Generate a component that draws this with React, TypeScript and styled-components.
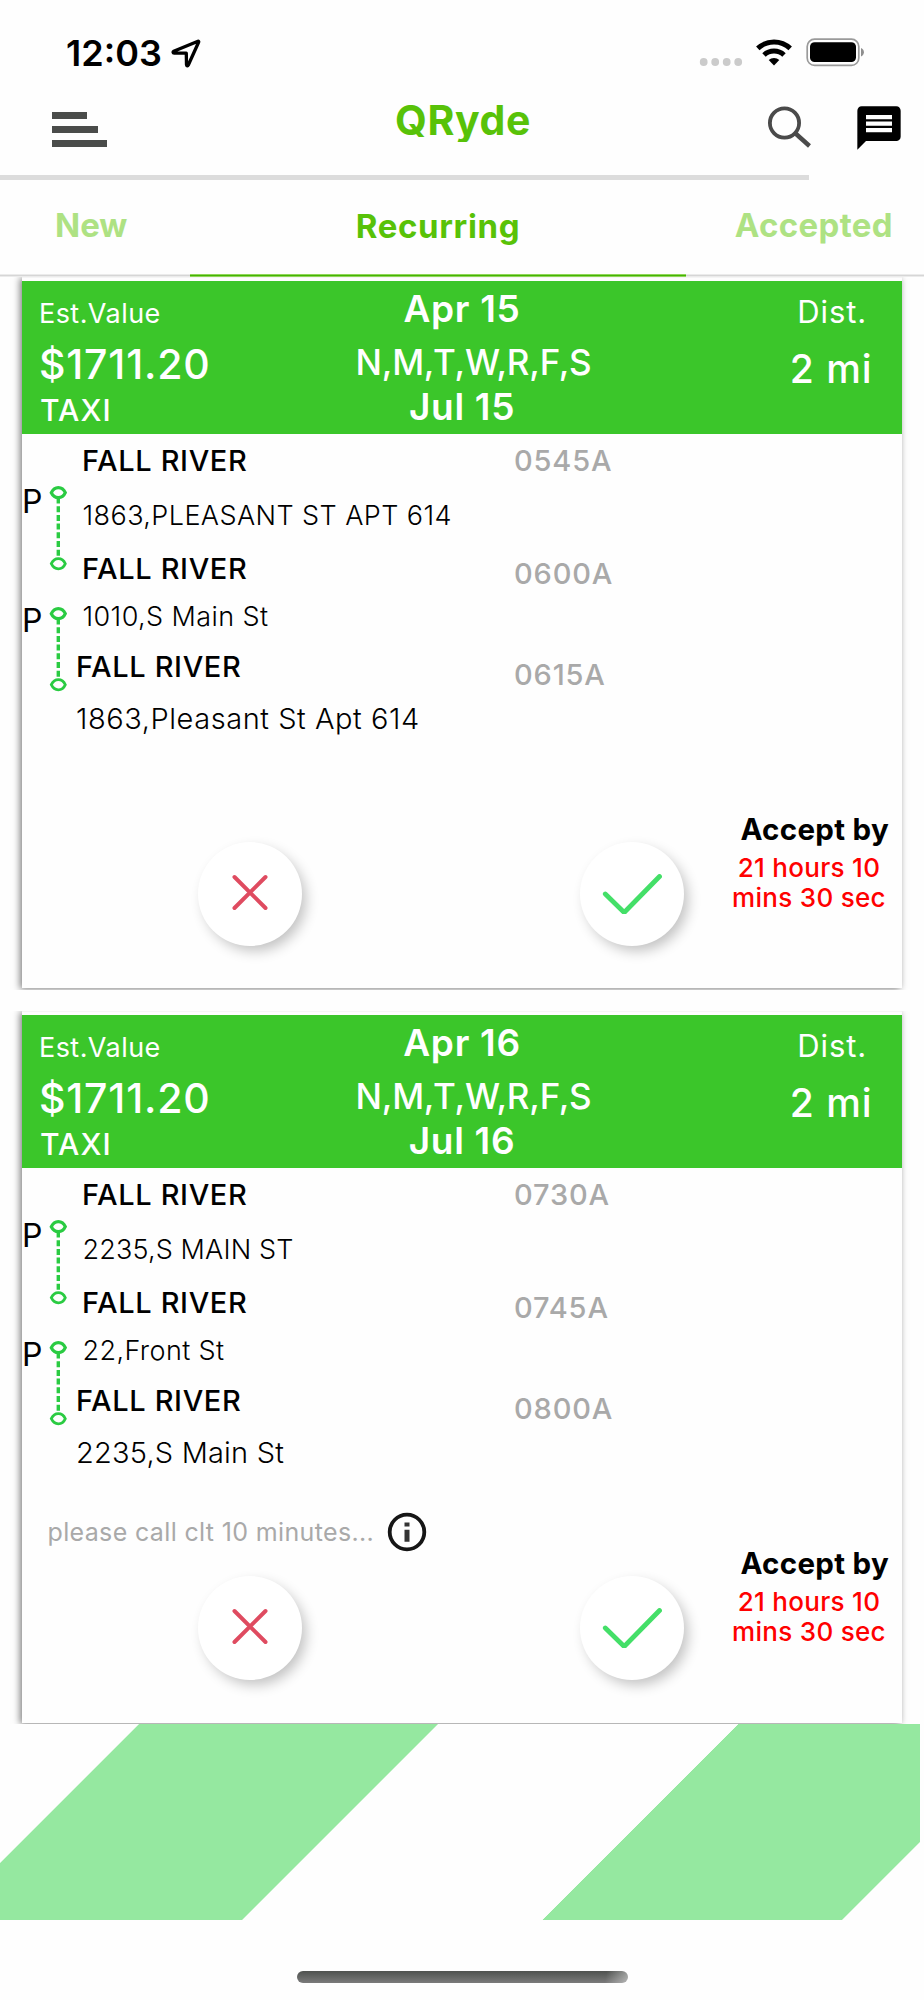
import React from 'react';
import styled, { createGlobalStyle, css } from 'styled-components';
import { MdMessage } from 'react-icons/md';

const GlobalStyle = createGlobalStyle`
  *, *::before, *::after { box-sizing: border-box; }
  body {
    margin: 0;
    background: #fefefe;
    color: #000;
    font-family: Inter, "Liberation Sans", sans-serif;
  }
  button { border: 0; padding: 0; font: inherit; }
  svg { display: block; flex: none; }
`;

const type = (size: number, line: number, weight: number, tracking = 0) => css`
  font-size: ${size}px;
  line-height: ${line}px;
  font-weight: ${weight};
  letter-spacing: ${tracking}px;
  white-space: nowrap;
`;

const Screen = styled.main`
  width: 924px;
  height: 2000px;
  display: flex;
  flex-direction: column;
  overflow: hidden;
  background: #fefefe;
`;

/* Status bar */
const StatusBar = styled.div`
  flex: none;
  height: 80px;
  padding: 33px 59px 0 66px;
  display: flex;
  align-items: flex-start;
`;

const Clock = styled.span`
  ${type(36, 40, 600)}
`;

const LocationGlyph = styled.svg`
  margin: 6px 0 0 9px;
`;

const StatusIcons = styled.div`
  margin: 5px 0 0 auto;
`;

/* App bar */
const AppBar = styled.header`
  flex: none;
  height: 95px;
  padding: 15px 23px 0 52px;
  display: grid;
  grid-template-columns: 343px 1fr 134px;
`;

const MenuButton = styled.button`
  width: 55px;
  height: 36px;
  margin-top: 17px;
  display: flex;
  flex-direction: column;
  gap: 7px;
  background: none;
`;

const MenuBar = styled.span<{ $width: number }>`
  width: ${(p) => p.$width}px;
  height: 7px;
  background: #4a4c4a;
`;

const Title = styled.h1`
  ${type(41, 50, 700, 0.6)}
  margin: 0;
  height: 47px;
  overflow: hidden;
  color: #58c208;
`;

const AppActions = styled.div`
  display: flex;
  align-items: flex-start;
  justify-content: space-between;
`;

const SearchGlyph = styled.svg`
  margin-top: 11px;
`;

const ChatGlyph = styled(MdMessage)`
  margin: 7px -4px 0 0;
`;

const Divider = styled.div`
  flex: none;
  width: 809px;
  height: 4.5px;
  background: #dcdcdc;
`;

/* Tabs */
const Tabs = styled.nav`
  flex: none;
  height: 97.5px;
  display: grid;
  grid-template-columns: 190px 496px 238px;
`;

const Tab = styled.button<{ $active?: boolean; $align: string; $inset?: number; $tracking?: number }>`
  ${type(33, 40, 700)}
  letter-spacing: ${(p) => p.$tracking ?? 0}px;
  padding: 0 ${(p) => p.$inset ?? 0}px ${(p) => (p.$active ? 4 : 6.5)}px;
  text-align: ${(p) => p.$align};
  color: ${(p) => (p.$active ? '#58c208' : '#aee283')};
  background: ${(p) =>
    p.$active
      ? 'linear-gradient(#8fd658 0 1px, #45b304 1px 2px, #8fd658 2px)'
      : 'linear-gradient(#ebebeb 0 1px, #d6d6d6 1px 2px, #ebebeb 2px)'}
    left bottom / 100% 3px no-repeat;
`;

/* Trip cards */
const CardClip = styled.div`
  flex: none;
  padding: 0 21.7px 1.5px 22px;
  overflow: hidden;
  & + & { margin-top: 21.5px; }
`;

const Card = styled.article`
  height: 711.3px;
  border-top: 1px solid #f5f5f5;
  padding-top: 3px;
  background: #fefefe;
  box-shadow: -2px 1px 7px rgba(0, 0, 0, 0.5);
`;

const CardHeader = styled.div`
  height: 153px;
  padding: 0 19px;
  display: grid;
  grid-template-columns: 240px 362px 1fr;
  background: #3bc62a;
  color: #fff;
`;

const HeaderColumn = styled.div<{ $center?: boolean; $inset?: number }>`
  display: flex;
  flex-direction: column;
  padding-left: ${(p) => p.$inset ?? 0}px;
  align-items: ${(p) => (p.$center ? 'center' : 'flex-start')};
`;

const ValueLabel = styled.span`
  ${type(27, 32, 400, 0.44)}
  margin: 17px 0 0 -2px;
`;

const Value = styled.span`
  ${type(41, 44, 450, 0.8)}
  margin: 12px 0 0 -2px;
`;

const Vehicle = styled.span`
  ${type(30, 32, 500, 1.1)}
  margin: 8px 0 0 -1px;
`;

const TripDate = styled.span<{ $gap: number }>`
  ${type(37, 40, 600, 0.7)}
  margin-top: ${(p) => p.$gap}px;
`;

const Days = styled.span`
  ${type(35, 40, 500, -0.22)}
  margin: 13px 0 0 23px;
`;

const DistanceLabel = styled.span`
  ${type(31, 36, 400, 0.9)}
  margin-top: 12.5px;
`;

const Distance = styled.span`
  ${type(39, 44, 550, 1)}
  margin: 17px 0 0 -2px;
`;

const Route = styled.div`
  height: 344px;
  display: grid;
  grid-template-columns: 60px 432px 1fr;
`;

const Rail = styled.div`
  padding-top: 51px;
`;

const Leg = styled.div`
  height: 119px;
  display: grid;
  grid-template-columns: 27px 1fr;
`;

const LegMark = styled.span`
  ${type(32, 33, 400)}
`;

const Connector = styled.svg<{ $drop: number }>`
  margin-top: ${(p) => p.$drop}px;
`;

const Stops = styled.div`
  display: flex;
  flex-direction: column;
  padding-top: 11px;
`;

const City = styled.span<{ $gap?: number; $inset?: number }>`
  ${type(29, 32, 500, 0.63)}
  margin: ${(p) => p.$gap ?? 0}px 0 0 ${(p) => p.$inset ?? 0}px;
`;

const Street = styled.span<{ $gap: number; $tracking: number }>`
  ${type(27, 32, 300)}
  letter-spacing: ${(p) => p.$tracking}px;
  margin: ${(p) => p.$gap}px 0 0 0.5px;
`;

const FinalStreet = styled.span<{ $tracking: number }>`
  ${type(29, 32, 300)}
  letter-spacing: ${(p) => p.$tracking}px;
  margin: 20px 0 0 -6px;
`;

const Times = styled.div`
  display: flex;
  flex-direction: column;
  padding-top: 11px;
  color: #a9a9a9;
`;

const Time = styled.span<{ $gap?: number }>`
  ${type(29, 32, 550, 0.85)}
  margin-top: ${(p) => p.$gap ?? 0}px;
`;

const NoteRow = styled.div`
  height: 38px;
  padding-left: 25.5px;
  display: flex;
  align-items: flex-start;
`;

const Note = styled.span`
  ${type(25, 32, 400, 0.35)}
  width: 339.5px;
  padding-top: 4px;
  color: #a9a9a9;
`;

const Actions = styled.div`
  display: flex;
  padding-left: 176px;
`;

const RoundButton = styled.button`
  width: 104px;
  height: 104px;
  margin: 26px 278px 0 0;
  border-radius: 50%;
  display: grid;
  place-items: center;
  background: #fff;
  box-shadow: 5px 6px 13px -1px rgba(0, 0, 0, 0.24);
  & + & { margin-right: 45px; }
`;

const Deadline = styled.div`
  width: 160px;
  text-align: center;
`;

const DeadlineLabel = styled.div`
  ${type(29.5, 24, 700, 0.3)}
  padding-top: 1px;
  text-align: right;
`;

const Countdown = styled.div`
  ${type(26, 30, 550, 0.3)}
  margin-top: 12px;
  color: #f00;
`;

/* Footer */
const Stripes = styled.div`
  flex: none;
  width: 919.7px;
  height: 196px;
  background: linear-gradient(
    135deg,
    transparent 98px, #95e8a0 98.7px 309.4px, transparent 310.1px 521.8px,
    #95e8a0 522.5px 733.6px, transparent 734.3px
  );
`;

const HomeIndicator = styled.div`
  flex: none;
  width: 331px;
  height: 12px;
  margin: 51px 0 0 297px;
  border-radius: 6px;
  background:
    linear-gradient(100deg, transparent 93%, rgba(255, 255, 255, 0.45)),
    linear-gradient(#4f524f, #7b7b7b);
`;

interface Trip {
  start: string;
  end: string;
  stops: [string, string, string];
  times: [string, string, string];
  tracking: [number, number, number];
  note?: string;
}

const trips: Trip[] = [
  {
    start: 'Apr 15',
    end: 'Jul 15',
    stops: ['1863,PLEASANT ST APT 614', '1010,S Main St', '1863,Pleasant St Apt 614'],
    times: ['0545A', '0600A', '0615A'],
    tracking: [0.42, 0.4, 0.55],
  },
  {
    start: 'Apr 16',
    end: 'Jul 16',
    stops: ['2235,S MAIN ST', '22,Front St', '2235,S Main St'],
    times: ['0730A', '0745A', '0800A'],
    tracking: [0.15, 0.4, 0.2],
    note: 'please call clt 10 minutes...',
  },
];

const LocationIcon = () => (
  <LocationGlyph width="30" height="29" viewBox="0 0 30 29">
    <path
      d="M27 2.3 2.7 12.3c-1 .5-.8 1.7.4 1.7l12.2.2.2 11.6c0 1.2 1.3 1.4 1.7.4L27.7 3c.2-.5-.2-.9-.7-.7Z"
      fill="none"
      stroke="#000"
      strokeWidth="3.3"
      strokeLinejoin="round"
    />
  </LocationGlyph>
);

const SignalIcons = () => (
  <svg width="166" height="30" viewBox="0 0 166 30">
    <g fill="#cbcbcb">
      <circle cx="4.7" cy="24" r="3.9" />
      <circle cx="16.2" cy="24" r="3.9" />
      <circle cx="27.7" cy="24" r="3.9" />
      <circle cx="39.2" cy="24" r="3.9" />
    </g>
    <g fill="none" stroke="#000" strokeWidth="5">
      <path d="M58.8 10.4a23.6 23.6 0 0 1 32.4 0" />
      <path d="M65 17a14.6 14.6 0 0 1 20 0" />
    </g>
    <path d="M75 27.4 69.7 22a7.7 7.7 0 0 1 10.6 0Z" />
    <rect x="108.2" y="1.2" width="51.6" height="26.2" rx="7.4" fill="none" stroke="#9a9a9a" strokeWidth="1.7" />
    <rect x="111" y="4.2" width="46" height="19.8" rx="4.6" />
    <path d="M162 10c1.900.8 2.900 2.300 2.900 4.200s-1 3.400-2.900 4.200Z" fill="#8f8f8f" />
  </svg>
);

const SearchIcon = () => (
  <SearchGlyph width="45" height="42" viewBox="0 0 45 42" fill="none" stroke="#4a4a4a">
    <circle cx="17.5" cy="17" r="14.6" strokeWidth="3.8" />
    <path d="m28 27 14.5 13" strokeWidth="4.4" />
  </SearchGlyph>
);

const RouteConnector = ({ drop }: { drop: number }) => (
  <Connector $drop={drop} width="18" height="86" viewBox="0 0 18 86" fill="none" stroke="#2acb42">
    <path
      d="M2.3 7.700C4 4.200 6.500 2.600 9.300 2.600S14.800 4.200 16.300 7.700C14.800 11.200 12 12.600 9.300 12.600S4 11.200 2.300 7.700Z"
      strokeWidth="3.2"
    />
    <path d="M9.300 12.500V71.500" strokeWidth="3.400" strokeDasharray="6 2.700" />
    <path
      d="M2.300 78.700C4 75.200 6.500 73.600 9.300 73.600S14.800 75.200 16.300 78.700C14.800 82.200 12 83.800 9.300 83.800S4 82.200 2.300 78.700Z"
      strokeWidth="2.800"
    />
  </Connector>
);

const InfoIcon = () => (
  <svg width="40" height="40" viewBox="0 0 40 40">
    <circle cx="20" cy="20" r="17.3" fill="none" stroke="#161616" strokeWidth="3.8" />
    <path d="M17.500 10.500h5v4h-5zM17.500 17.700h5v12h-5z" fill="#333" />
  </svg>
);

const CrossIcon = () => (
  <svg width="40" height="40" viewBox="0 0 40 40" fill="none" stroke="#df4b60" strokeWidth="4" strokeLinecap="round">
    <path d="m4.500 3 31 31M35.500 3l-31 31" />
  </svg>
);

const CheckIcon = () => (
  <svg width="60" height="40" viewBox="0 0 60 40" fill="none" stroke="#44df68" strokeWidth="4.8">
    <path d="m3.300 20 18.900 18.500L57.500 2.500" strokeLinecap="round" />
  </svg>
);

function TripCard({ trip }: { trip: Trip }) {
  return (
    <CardClip>
      <Card>
        <CardHeader>
          <HeaderColumn>
            <ValueLabel>Est.Value</ValueLabel>
            <Value>$1711.20</Value>
            <Vehicle>TAXI</Vehicle>
          </HeaderColumn>
          <HeaderColumn $center>
            <TripDate $gap={7.5}>{trip.start}</TripDate>
            <Days>N,M,T,W,R,F,S</Days>
            <TripDate $gap={5}>{trip.end}</TripDate>
          </HeaderColumn>
          <HeaderColumn $center $inset={138}>
            <DistanceLabel>Dist.</DistanceLabel>
            <Distance>2 mi</Distance>
          </HeaderColumn>
        </CardHeader>
        <Route>
          <Rail>
            <Leg>
              <LegMark>P</LegMark>
              <RouteConnector drop={0} />
            </Leg>
            <Leg>
              <LegMark>P</LegMark>
              <RouteConnector drop={2} />
            </Leg>
          </Rail>
          <Stops>
            <City>FALL RIVER</City>
            <Street $gap={22.5} $tracking={trip.tracking[0]}>{trip.stops[0]}</Street>
            <City $gap={21.5}>FALL RIVER</City>
            <Street $gap={16} $tracking={trip.tracking[1]}>{trip.stops[1]}</Street>
            <City $gap={17.5} $inset={-6}>FALL RIVER</City>
            <FinalStreet $tracking={trip.tracking[2]}>{trip.stops[2]}</FinalStreet>
          </Stops>
          <Times>
            <Time>{trip.times[0]}</Time>
            <Time $gap={80.5}>{trip.times[1]}</Time>
            <Time $gap={69.5}>{trip.times[2]}</Time>
          </Times>
        </Route>
        <NoteRow>
          {trip.note && (
            <>
              <Note>{trip.note}</Note>
              <InfoIcon />
            </>
          )}
        </NoteRow>
        <Actions>
          <RoundButton aria-label="Decline">
            <CrossIcon />
          </RoundButton>
          <RoundButton aria-label="Accept">
            <CheckIcon />
          </RoundButton>
          <Deadline>
            <DeadlineLabel>Accept by</DeadlineLabel>
            <Countdown>
              21 hours 10
              <br />
              mins 30 sec
            </Countdown>
          </Deadline>
        </Actions>
      </Card>
    </CardClip>
  );
}

export default function App() {
  return (
    <>
      <GlobalStyle />
      <Screen>
        <StatusBar>
          <Clock>12:03</Clock>
          <LocationIcon />
          <StatusIcons>
            <SignalIcons />
          </StatusIcons>
        </StatusBar>
        <AppBar>
          <MenuButton aria-label="Menu">
            <MenuBar $width={35} />
            <MenuBar $width={46} />
            <MenuBar $width={55} />
          </MenuButton>
          <Title>QRyde</Title>
          <AppActions>
            <SearchIcon />
            <ChatGlyph size={52} />
          </AppActions>
        </AppBar>
        <Divider />
        <Tabs>
          <Tab $align="left" $inset={55}>New</Tab>
          <Tab $active $align="center" $tracking={0.66}>Recurring</Tab>
          <Tab $align="right" $inset={31} $tracking={0.35}>Accepted</Tab>
        </Tabs>
        {trips.map((trip) => (
          <TripCard key={trip.start} trip={trip} />
        ))}
        <Stripes />
        <HomeIndicator />
      </Screen>
    </>
  );
}
